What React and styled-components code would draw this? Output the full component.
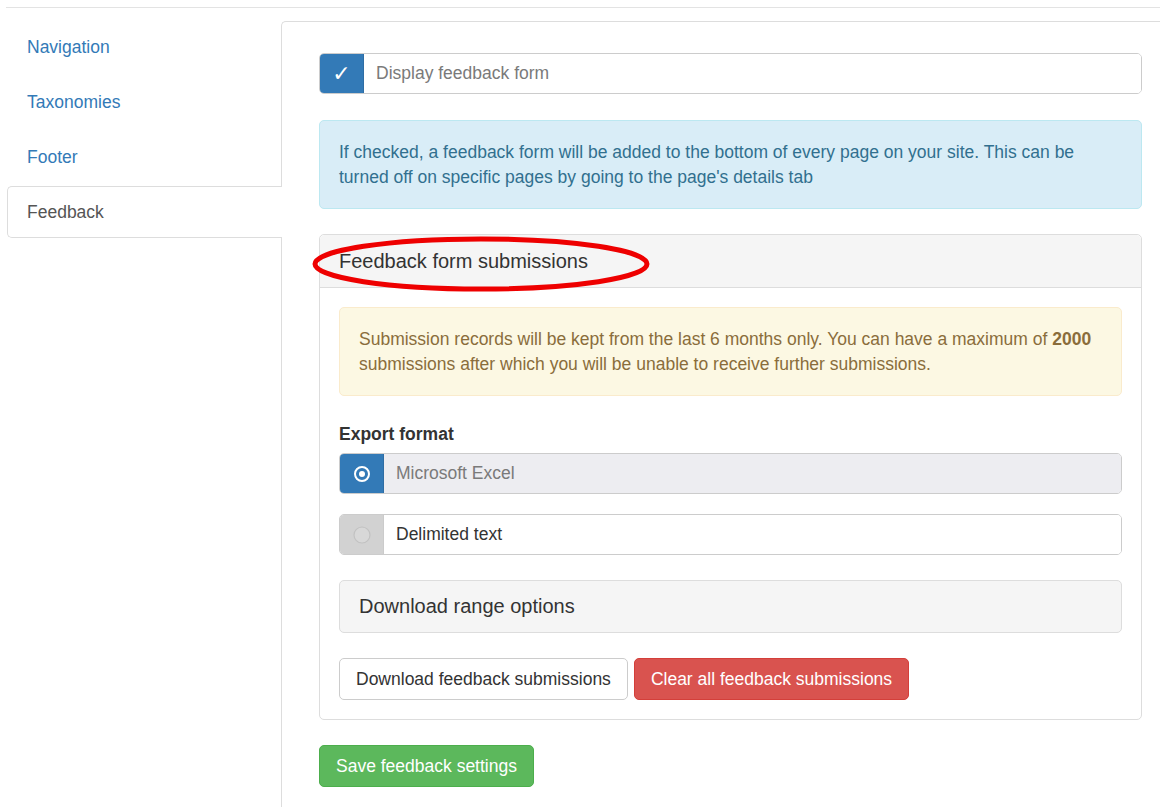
import React from 'react';
import styled, { createGlobalStyle } from 'styled-components';

const GlobalStyle = createGlobalStyle`
  body {
    margin: 0;
    background: #fff;
    font-family: "Liberation Sans", Arial, sans-serif;
    font-size: 17.5px;
    color: #333;
  }
  * { box-sizing: border-box; }
`;

const TopRule = styled.div`
  margin: 7px 0 0 6px;
  height: 1px;
  background: #e3e3e3;
`;

const Layout = styled.div`
  display: flex;
  margin-top: 13px;
  min-height: 786px;
`;

const Sidebar = styled.ul`
  list-style: none;
  margin: 0 -1px 0 7px;
  padding: 0;
  width: 275px;
  flex-shrink: 0;
`;

const Tab = styled.li`
  position: relative;
  z-index: 1;
  height: 52px;
  margin-bottom: 3px;
  display: flex;
  align-items: center;
  padding-left: 19px;
  padding-top: 1px;
  border: 1px solid ${p => (p.$active ? '#ddd' : 'transparent')};
  border-right: none;
  border-radius: 5px 0 0 5px;
  background: ${p => (p.$active ? '#fff' : 'transparent')};
  color: ${p => (p.$active ? '#555' : '#337ab7')};
  cursor: pointer;
`;

const Pane = styled.div`
  flex: 1;
  border-left: 1px solid #ddd;
  border-top: 1px solid #ddd;
  border-top-left-radius: 5px;
  padding: 31px 18px 20px 37px;
`;

const InputGroup = styled.div`
  display: flex;
  height: 41px;
  border: 1px solid #ccc;
  border-radius: 5px;
  overflow: hidden;
  margin-bottom: ${p => p.$gap || 0}px;
`;

const Addon = styled.span`
  width: 44px;
  flex-shrink: 0;
  display: flex;
  align-items: center;
  justify-content: center;
  background: ${p => (p.$on ? '#337ab7' : '#d2d2d2')};
  color: #fff;
  border-right: 1px solid ${p => (p.$on ? '#2e6da4' : '#cbcbcb')};
`;

const Check = styled.span`
  font-family: "DejaVu Sans", sans-serif;
  font-size: 22px;
  font-weight: bold;
  line-height: 1;
`;

const FieldText = styled.div`
  flex: 1;
  display: flex;
  align-items: center;
  padding-left: 12px;
  background: ${p => (p.$disabled ? '#ededf1' : '#fff')};
  color: ${p => (p.$muted ? '#7a7a7a' : '#333')};
`;

const Alert = styled.div`
  padding: 19px 19px 18px;
  border: 1px solid ${p => p.$border};
  border-radius: 5px;
  background: ${p => p.$bg};
  color: ${p => p.$color};
  line-height: 25px;
  margin: ${p => p.$margin};

  b { font-weight: bold; }
`;

const Panel = styled.div`
  border: 1px solid #ddd;
  border-radius: 5px;
  margin-top: 25px;
`;

const PanelHeading = styled.div`
  position: relative;
  height: 53px;
  display: flex;
  align-items: center;
  padding: 0 19px;
  background: #f5f5f5;
  border-bottom: 1px solid #ddd;
  border-radius: 5px 5px 0 0;
  font-size: 20px;
`;

const Marker = styled.svg`
  position: absolute;
  left: -8px;
  top: 1px;
  overflow: visible;
  pointer-events: none;
`;

const PanelBody = styled.div`
  padding: 19px;
`;

const Label = styled.div`
  font-weight: bold;
  line-height: 25px;
  margin-bottom: 6px;
`;

const RangeBox = styled.div`
  height: 53px;
  margin-top: 25px;
  display: flex;
  align-items: center;
  padding-left: 19px;
  background: #f5f5f5;
  border: 1px solid #ddd;
  border-radius: 5px;
  font-size: 20px;
`;

const ButtonRow = styled.div`
  display: flex;
  gap: 6px;
  margin-top: 25px;
`;

const Button = styled.button`
  height: 42px;
  padding: 0 16px;
  font-family: inherit;
  font-size: 17.5px;
  border-radius: 5px;
  border: 1px solid ${p => p.$border};
  background: ${p => p.$bg};
  color: ${p => p.$color};
  cursor: pointer;
`;

const SaveRow = styled.div`
  margin-top: 25px;
`;

function RadioIcon({ on }) {
  return (
    <svg width="20" height="20" viewBox="0 0 20 20">
      {on ? (
        <>
          <circle cx="10" cy="10" r="7" fill="none" stroke="#fff" strokeWidth="2" />
          <circle cx="10" cy="10" r="3" fill="#fff" />
        </>
      ) : (
        <circle cx="10" cy="10" r="8" fill="#d8d8d8" stroke="#c2c2c2" strokeWidth="1.2" />
      )}
    </svg>
  );
}

export default function App() {
  const tabs = ['Navigation', 'Taxonomies', 'Footer', 'Feedback'];

  return (
    <>
      <GlobalStyle />
      <TopRule />
      <Layout>
        <Sidebar>
          {tabs.map(t => (
            <Tab key={t} $active={t === 'Feedback'}>{t}</Tab>
          ))}
        </Sidebar>
        <Pane>
          <InputGroup>
            <Addon $on><Check>✓</Check></Addon>
            <FieldText $muted>Display feedback form</FieldText>
          </InputGroup>

          <Alert $bg="#d9edf7" $border="#bce8f1" $color="#31708f" $margin="26px 0 0">
            If checked, a feedback form will be added to the bottom of every page on your site. This can be
            turned off on specific pages by going to the page's details tab
          </Alert>

          <Panel>
            <PanelHeading>
              Feedback form submissions
              <Marker width="338" height="56">
                <ellipse cx="169" cy="28" rx="166" ry="25" fill="none" stroke="#ee0000" strokeWidth="5" />
              </Marker>
            </PanelHeading>
            <PanelBody>
              <Alert $bg="#fcf8e3" $border="#faebcc" $color="#8a6d3b" $margin="0 0 26px">
                Submission records will be kept from the last 6 months only. You can have a maximum of <b>2000</b>{' '}
                submissions after which you will be unable to receive further submissions.
              </Alert>

              <Label>Export format</Label>
              <InputGroup $gap={20}>
                <Addon $on><RadioIcon on /></Addon>
                <FieldText $disabled $muted>Microsoft Excel</FieldText>
              </InputGroup>
              <InputGroup>
                <Addon><RadioIcon /></Addon>
                <FieldText>Delimited text</FieldText>
              </InputGroup>

              <RangeBox>Download range options</RangeBox>

              <ButtonRow>
                <Button $bg="#fff" $border="#ccc" $color="#333">Download feedback submissions</Button>
                <Button $bg="#d9534f" $border="#d43f3a" $color="#fff">Clear all feedback submissions</Button>
              </ButtonRow>
            </PanelBody>
          </Panel>

          <SaveRow>
            <Button $bg="#5cb85c" $border="#4cae4c" $color="#fff">Save feedback settings</Button>
          </SaveRow>
        </Pane>
      </Layout>
    </>
  );
}
